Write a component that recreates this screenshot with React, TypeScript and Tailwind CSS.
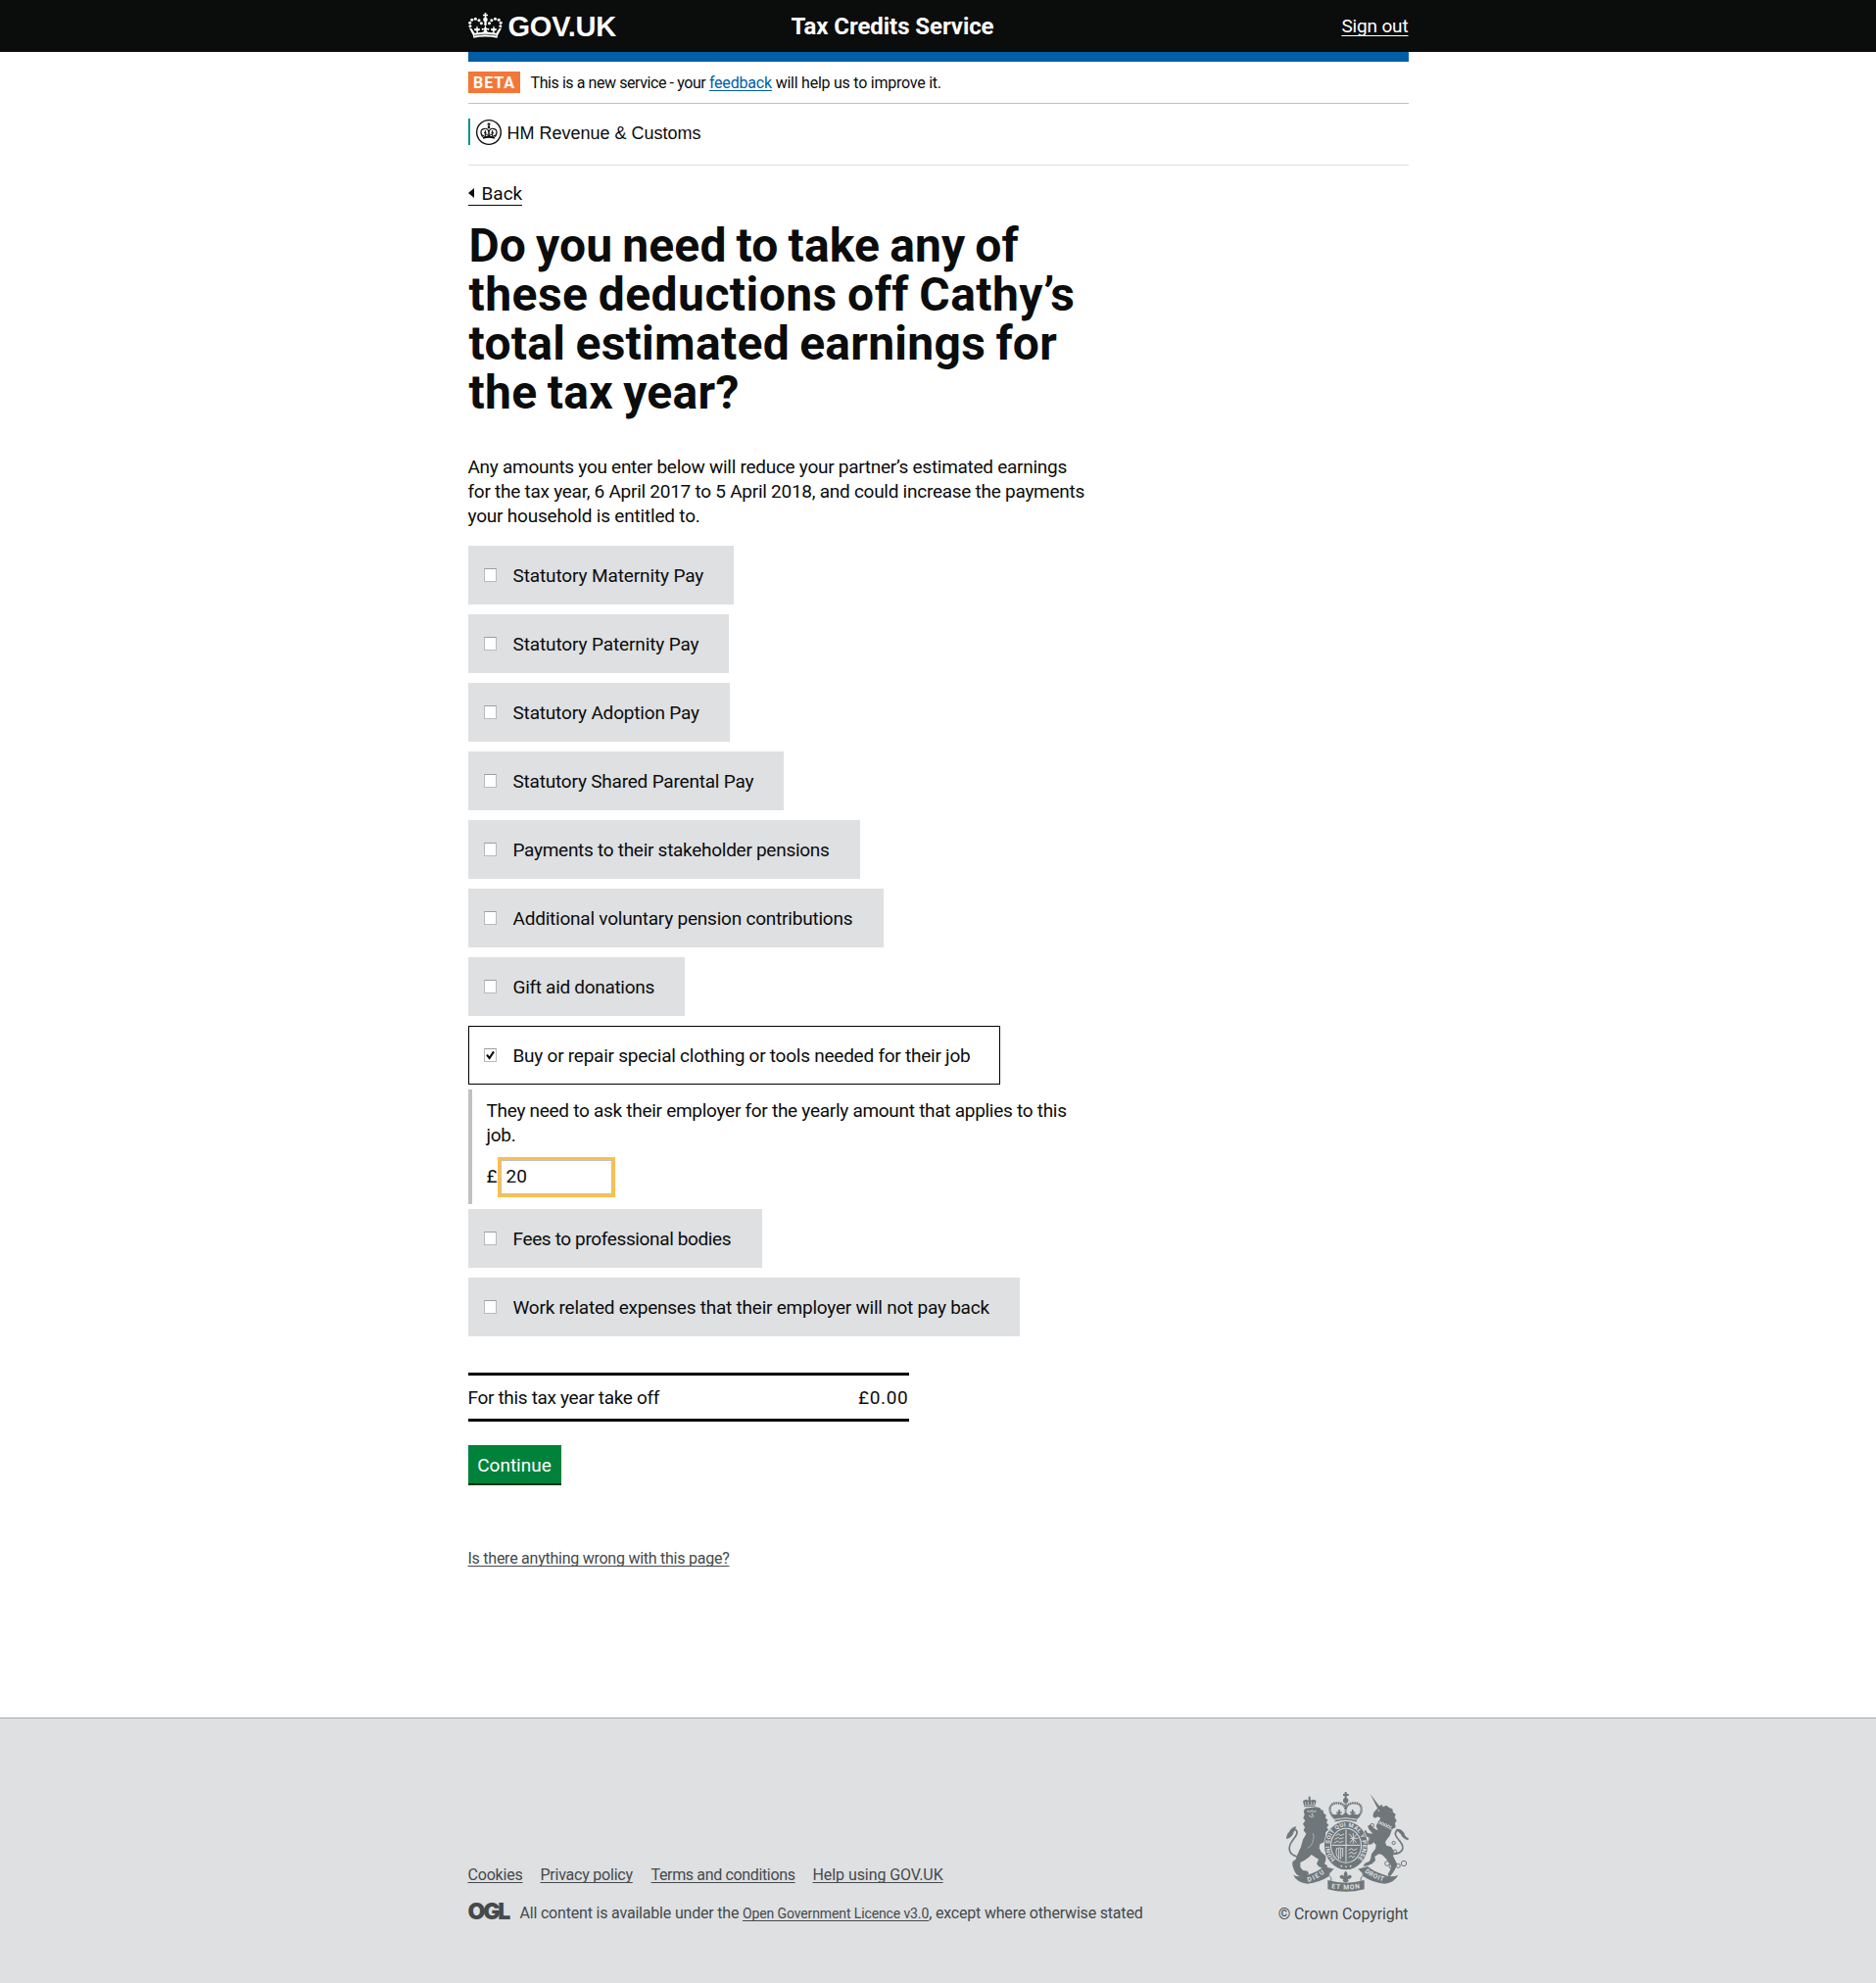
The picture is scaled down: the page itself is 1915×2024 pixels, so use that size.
import React from 'react';

type Deduction = { label: string; box: string; tracking: string };

const beforeSelected: Deduction[] = [
  { label: 'Statutory Maternity Pay', box: 'w-[271px]', tracking: 'tracking-[-0.12px]' },
  { label: 'Statutory Paternity Pay', box: 'w-[266px]', tracking: 'tracking-[-0.12px]' },
  { label: 'Statutory Adoption Pay', box: 'w-[267px]', tracking: 'tracking-[-0.18px]' },
  { label: 'Statutory Shared Parental Pay', box: 'w-[322px]', tracking: 'tracking-[-0.2px]' },
  { label: 'Payments to their stakeholder pensions', box: 'w-[400px]', tracking: 'tracking-[-0.28px]' },
  { label: 'Additional voluntary pension contributions', box: 'w-[424px]', tracking: 'tracking-[-0.22px]' },
  { label: 'Gift aid donations', box: 'w-[221px]', tracking: 'tracking-[-0.3px]' },
];

const afterSelected: Deduction[] = [
  { label: 'Fees to professional bodies', box: 'w-[300px]', tracking: 'tracking-[-0.37px]' },
  { label: 'Work related expenses that their employer will not pay back', box: 'w-[563px]', tracking: 'tracking-[-0.23px]' },
];

function Checkbox({ checked = false }: { checked?: boolean }) {
  return (
    <span className="mt-[23px] flex h-[14px] w-[13px] shrink-0 items-center justify-center border border-[#b8babb] border-t-[#9c9d9e] bg-white">
      {checked && (
        <svg viewBox="0 0 11 12" className="h-3 w-[11px]">
          <path d="M2 5.6 L4.6 9 L9 2.4" fill="none" stroke="#0b0c0c" strokeWidth="2.1" />
        </svg>
      )}
    </span>
  );
}

function Option({ item }: { item: Deduction }) {
  return (
    <label className={`flex h-[60px] bg-[#dee0e2] pl-4 ${item.box}`}>
      <Checkbox />
      <span className={`ml-[17px] pt-[18px] whitespace-nowrap ${item.tracking}`}>{item.label}</span>
    </label>
  );
}

function HeaderCrown() {
  const dots: [number, number][] = [[30, 80], [29, 70], [35, 61], [46, 58], [57, 62], [64, 71]];
  return (
    <svg viewBox="24 39 105 78" className="mt-[13px] h-[26px] w-[35px]" fill="#fff">
      {dots.map(([x, y]) => (
        <g key={`${x}-${y}`}>
          <circle cx={x} cy={y} r="4.6" />
          <circle cx={152.5 - x} cy={y} r="4.6" />
        </g>
      ))}
      <path d="M74 39h5v5h5v5h-5v5h-5v-5h-5v-5h5z" />
      <circle cx="76.3" cy="60" r="7" />
      <path d="M73 66h7v12h-7z" />
      <path d="M27 86 L35 88 L44 102 L50 100 L49 95 L42 92 L43 87 L48 88 L51 78 L54 88 L59 87 L60 92 L53 95 L54 100 L66 99 L72 96 L73 91 L66 93 L65 86 L72 88 L76.3 77 L81 88 L88 86 L87 93 L80 91 L81 96 L87 99 L99 100 L100 95 L93 92 L94 87 L99 88 L102 78 L105 88 L110 87 L111 92 L104 95 L103 100 L109 102 L118 88 L126 86 L114 109 L113 116 Q76 109 40 116 L39 109 Z" />
      <path d="M42 108.5 Q76 102 111 108.5" fill="none" stroke="#0b0c0c" strokeWidth="2" />
    </svg>
  );
}

function DepartmentCrest() {
  return (
    <svg viewBox="48 36 78 78" className="h-[26px] w-[26px]">
      <circle cx="87" cy="75" r="37" fill="#fff" stroke="#0b0c0c" strokeWidth="4" />
      <g fill="none" stroke="#0b0c0c">
        <path d="M68 89 C58 74 64 64 74 64 C82 63 86 67 87 76 C88 67 92 63 100 64 C110 64 116 74 106 89" strokeWidth="3.4" />
        <path d="M69 92 Q87 87 105 92" strokeWidth="6" />
        <path d="M87 46v12M82.500 50.500h9" strokeWidth="3.600" />
        <path d="M76 69v16M87 74v14M98 69v16M72 77h8M94 77h8M83 81h8" strokeWidth="3.2" />
        <path d="M66 84 L74 87 L80 82 L87 87 L94 82 L100 87 L108 84" strokeWidth="3" />
      </g>
      <circle cx="87" cy="60" r="4" fill="#0b0c0c" />
    </svg>
  );
}

function RoyalArms() {
  const g = '#6f777b';
  const bg = '#dee0e2';
  return (
    <svg viewBox="69 42 375 306" className="h-[102px] w-[125px]" fill={g}>
      <defs>
        <path id="garter" d="M219 249 A50.500 57.500 0 1 1 285 249" />
        <path id="scroll-left" d="M136 318 Q164 311 192 285" />
        <path id="scroll-mid" d="M207 336 Q251 345 298 336" />
        <path id="scroll-right" d="M309 287 Q334 308 368 316" />
      </defs>

      {/* lion */}
      <path d="M122 100 L128 92 L160 88 L172 91 L176 97 L182 98 L184 108 L191 112 L189 121 L196 128 L192 136 L199 144 L193 150 L198 158 L190 165 L189 176 L196 182 L207 180 L206 192 L196 199 L184 196 L172 202 L170 214 L176 226 L190 238 L190 252 L186 262 L195 268 L193 278 L180 276 L168 270 L162 262 L168 248 L158 242 L146 234 L138 242 L124 252 L112 258 L112 272 L120 282 L134 284 L138 292 L132 300 L112 302 L100 294 L94 284 L88 268 L88 256 L98 248 L104 232 L114 210 L120 188 L130 170 L122 160 L126 150 L120 140 L127 130 L121 122 L125 112 Z" />
      <path d="M133 100l10 3 4-5 6 5 8-3M138 114l8 5 8-4M148 106v8" fill="none" stroke={bg} strokeWidth="2.500" />
      <path d="M102 240 C78 234 72 216 86 194 C98 177 108 166 98 158 C92 154 88 164 82 174" fill="none" stroke={g} strokeWidth="5" />
      <path d="M69 186 Q70 170 78 164 Q84 150 100 148 Q96 158 92 164 Q90 180 69 186z" />
      <path d="M124 88 L120 70 Q128 62 136 68 L140 62 L145 68 Q155 62 161 70 L156 86 Z" />
      <path d="M137 56h6v10h-6z" />
      <path d="M128 73v8M136 72v8M146 72v8M154 72v8M124 84l32-3" fill="none" stroke={bg} strokeWidth="2" />
      <path d="M134 214q14-6 18-26M150 168q6 10 2 20" fill="none" stroke={bg} strokeWidth="1.500" />

      {/* unicorn */}
      <path d="M326 48 L356 88 L349 93 Z" />
      <path d="M348 92 L356 84 L362 80 L364 88 L376 83 L384 90 L394 94 L396 104 L404 110 L401 120 L407 130 L402 138 L404 150 L394 156 L390 164 L386 176 L378 186 L372 196 L376 206 L390 210 L398 222 L396 238 L402 250 L408 262 L404 276 L394 292 L384 304 L380 294 L388 280 L390 266 L382 256 L372 244 L362 234 L352 232 L340 240 L342 252 L332 262 L318 268 L304 270 L310 260 L324 254 L328 244 L330 232 L342 216 L344 204 L336 196 L332 202 L318 204 L310 198 L322 190 L326 182 L312 178 L304 166 L312 158 L318 168 L334 170 L322 156 L318 146 L328 142 L336 152 L350 160 L344 146 L350 134 L358 122 L350 118 L340 122 L334 116 L337 104 Z" />
      <path d="M350 136 L394 158" stroke={bg} strokeWidth="2.500" />
      <path d="M356 131l4 8 5-4 4 8 5-4 4 8 5-4 4 8 5-3" fill="none" stroke={bg} strokeWidth="3" />
      <circle cx="352" cy="99" r="2.500" fill={bg} />
      <g fill="none" stroke={g}>
        <path d="M394 232 C424 232 434 214 418 194 C404 178 398 168 408 160 C416 156 424 164 430 172" strokeWidth="5" />
        <circle cx="429" cy="261" r="8" strokeWidth="3" />
        <circle cx="412" cy="268" r="6" strokeWidth="3" />
        <circle cx="378" cy="261" r="7" strokeWidth="3" />
        <circle cx="390" cy="270" r="6" strokeWidth="3" />
        <circle cx="332" cy="145" r="6" strokeWidth="3" />
        <circle cx="328" cy="184" r="6" strokeWidth="3" />
        <circle cx="398" cy="198" r="5" strokeWidth="3" />
        <circle cx="402" cy="224" r="5" strokeWidth="3" />
      </g>
      <path d="M404 156 Q420 152 428 166 Q432 180 444 184 L442 190 Q424 184 420 172z" />

      {/* crown */}
      <g fill="none" stroke={g}>
        <path d="M217 122 C196 104 198 76 224 76 C240 75 248 84 251 94 C254 84 262 75 278 76 C304 76 306 104 285 122" strokeWidth="7" strokeDasharray="5 1.600" />
        <path d="M251 72v46" strokeWidth="6" strokeDasharray="5 1.600" />
        <path d="M251 42v20M243 51h17" strokeWidth="6" />
        <path d="M216 123 Q251 113 287 123M218 131 Q251 121 285 131" strokeWidth="5" />
        <path d="M231 96v20M272 96v20M223 105h16M264 105h16" strokeWidth="5" />
      </g>
      <circle cx="251" cy="68" r="8" />
      <path d="M206 108 L218 112 L230 107 L240 113 L251 104 L262 113 L273 107 L285 112 L297 108 L287 124 Q251 114 215 124z" />

      {/* garter and shield */}
      <ellipse cx="252" cy="206" rx="68" ry="76" fill={bg} />
      <ellipse cx="252" cy="206" rx="66" ry="74" />
      <ellipse cx="252" cy="206" rx="48" ry="54" fill={bg} />
      <ellipse cx="252" cy="206" rx="45" ry="51" />
      <text fill={bg} className="font-['Roboto'] text-[18px] font-bold">
        <textPath href="#garter" textLength="262">HONI SOIT QUI MAL Y PENSE</textPath>
      </text>
      <path d="M252 158v97M209 205h86" stroke={bg} strokeWidth="3" />
      <g fill="none" stroke={bg} strokeWidth="2.600">
        <path d="M220 176l10-6 4 6 12-5M217 187l12-6 4 5 12-4M215 198l12-6 5 5 12-4" />
        <path d="M262 170l22 28M284 172l-20 26M265 184h24M274 168v32" />
        <path d="M223 216q-4 20 8 30M230 216v32M236 216v32M242 216v24M222 216q10-6 22 0" />
        <path d="M260 220l10-5 4 6 12-5M260 231l10-5 4 6 12-5M260 242l8-5 4 6 8-5" />
      </g>
      <circle cx="238" cy="269" r="2.500" fill={bg} />
      <circle cx="252" cy="271" r="2.500" fill={bg} />
      <circle cx="266" cy="269" r="2.500" fill={bg} />

      {/* motto scroll */}
      <path d="M90 296 Q110 306 134 296 Q164 288 184 270 L216 278 Q196 288 200 300 Q170 320 134 323 Q102 320 90 296z" />
      <path d="M412 296 Q392 306 370 296 Q340 288 318 270 L288 278 Q308 288 304 300 Q334 320 370 323 Q400 320 412 296z" />
      <path d="M196 312 Q251 328 308 312 L308 340 Q251 355 196 340z" />
      <path d="M188 276q20 2 20 8-10 4-8 14 10 6 6 18M316 276q-20 2-20 8 10 4 8 14-10 6-6 18" fill="none" stroke={g} strokeWidth="3" />
      <path d="M251 284 Q260 292 255 301 Q264 292 269 300 Q270 308 258 309 L260 315 L251 320 L242 315 L244 309 Q232 308 233 300 Q240 292 247 301 Q242 292 251 284z" />
      <g fill={bg} className="font-['Roboto'] text-[20px] font-bold">
        <text><textPath href="#scroll-left" textLength="58">DIEU</textPath></text>
        <text><textPath href="#scroll-mid" textLength="88">ET MON</textPath></text>
        <text><textPath href="#scroll-right" textLength="64">DROIT</textPath></text>
      </g>
    </svg>
  );
}

const footerLinks = [
  { label: 'Cookies', style: 'w-[56px] tracking-[-0.2px]' },
  { label: 'Privacy policy', style: 'w-[95px] tracking-[-0.23px]' },
  { label: 'Terms and conditions', style: 'w-[147px] tracking-[-0.35px]' },
  { label: 'Help using GOV.UK', style: 'w-[134px] tracking-[-0.07px]' },
];

export default function App() {
  return (
    <div className="flex min-h-[2024px] flex-col bg-white font-['Roboto',sans-serif] text-[19px] leading-[25px] text-[#0b0c0c]">
      <header className="h-[53px] bg-[#0b0c0c] text-white">
        <div className="mx-auto flex w-[960px]">
          <div className="flex w-[330px]">
            <HeaderCrown />
            <span className="ml-[6px] font-['Liberation_Sans',sans-serif] text-[29px] leading-[55px] font-bold tracking-[-0.2px]">GOV.UK</span>
          </div>
          <span className="text-2xl leading-[55px] font-bold tracking-[-0.07px]">Tax Credits Service</span>
          <a className="mt-[14px] ml-auto tracking-[-0.15px] underline decoration-1 underline-offset-[3px] [text-decoration-skip-ink:none]">Sign out</a>
        </div>
      </header>

      <main className="mx-auto flex w-[960px] grow flex-col items-start">
        <div className="h-[10px] w-full bg-[#005ea5]" />
        <div className="flex h-[43px] w-full items-center border-b border-[#bfc1c3] text-base">
          <strong className="flex h-[22px] w-[53px] items-center justify-center bg-[#f47738] pt-px pl-px font-bold tracking-[0.9px] text-white">BETA</strong>
          <p className="ml-[11px] pt-[2px] tracking-[-0.42px] whitespace-pre">
            This is a new service - your{' '}
            <a className="tracking-[-0.19px] text-[#005ea5] underline decoration-1 underline-offset-2 [text-decoration-skip-ink:none]">feedback</a>
            <span className="tracking-[-0.24px]"> will help us to improve it.</span>
          </p>
        </div>

        <div className="h-[63px] w-full border-b border-[#dee0e2] pt-[15px]">
          <div className="flex h-[27px] items-center border-l-2 border-[#009390] pl-[6px]">
            <DepartmentCrest />
            <span className="ml-[6px] pt-[2px] font-['Liberation_Sans',sans-serif] text-lg leading-6">HM Revenue &amp; Customs</span>
          </div>
        </div>

        <a className="mt-4 flex h-[25px] items-start border-b border-[#0b0c0c]">
          <svg viewBox="0 0 6 10" className="mt-[7px] mr-2 h-[10px] w-[6px]">
            <path d="M6 0v10L0 5z" fill="#0b0c0c" />
          </svg>
          <span>Back</span>
        </a>

        <h1 className="mt-4 flex flex-col pl-px text-5xl leading-[50px] font-bold [word-spacing:-2px]">
          <span className="tracking-[0.12px]">Do you need to take any of</span>
          <span className="tracking-[0.45px]">these deductions off Cathy’s</span>
          <span className="tracking-[0.28px]">total estimated earnings for</span>
          <span className="tracking-[0.3px]">the tax year?</span>
        </h1>

        <p className="mt-[38px] flex flex-col tracking-[-0.275px]">
          <span>Any amounts you enter below will reduce your partner’s estimated earnings</span>
          <span className="tracking-[-0.26px]">for the tax year, 6 April 2017 to 5 April 2018, and could increase the payments</span>
          <span className="tracking-[-0.2px]">your household is entitled to.</span>
        </p>

        <div className="mt-[18px] flex flex-col gap-[10px]">
          {beforeSelected.map((item) => (
            <Option key={item.label} item={item} />
          ))}
          <label className="flex h-[60px] w-[543px] border border-black pl-[15px]">
            <span className="-mt-px flex">
              <Checkbox checked />
              <span className="ml-[17px] pt-[18px] tracking-[-0.24px] whitespace-nowrap">
                Buy or repair special clothing or tools needed for their job
              </span>
            </span>
          </label>
        </div>

        <div className="my-[5px] h-[117px] w-[640px] border-l-4 border-[#bfc1c3] pt-[9px] pl-[15px]">
          <p className="w-[610px] tracking-[-0.28px]">They need to ask their employer for the yearly amount that applies to this job.</p>
          <div className="mt-[10px] flex items-center">
            <span className="w-[11px] pb-[2px]">£</span>
            <span className="flex h-[41px] w-[120px] items-center border-[3px] border-[#ffbf47]">
              <span className="flex h-[35px] w-[114px] items-center border border-[#bfc1c3] pb-[2px] pl-[5px]">20</span>
            </span>
          </div>
        </div>

        <div className="flex flex-col gap-[10px]">
          {afterSelected.map((item) => (
            <Option key={item.label} item={item} />
          ))}
        </div>

        <div className="mt-[37px] flex h-[50px] w-[450px] justify-between border-y-[3px] border-black pt-[10px]">
          <span className="tracking-[-0.33px]">For this tax year take off</span>
          <span className="tracking-[0.7px]">£0.00</span>
        </div>

        <button className="mt-6 h-[41px] w-[95px] border-b-2 border-[#003618] bg-[#00823b] pt-px text-white">Continue</button>

        <a className="mt-[65px] text-base leading-5 tracking-[-0.25px] text-[#454a4c] underline decoration-1 underline-offset-2 [text-decoration-skip-ink:none]">
          Is there anything wrong with this page?
        </a>
      </main>

      <footer className="h-[271px] border-t border-[#a1acb2] bg-[#dee0e2] text-base leading-5 text-[#454a4c]">
        <div className="mx-auto flex w-[960px] justify-between">
          <div className="pt-[150px]">
            <nav className="flex gap-[18px]">
              {footerLinks.map((link) => (
                <a key={link.label} className={`whitespace-nowrap underline decoration-1 underline-offset-2 [text-decoration-skip-ink:none] ${link.style}`}>
                  {link.label}
                </a>
              ))}
            </nav>
            <div className="mt-[19px] flex items-start">
              <span className="-mt-[2px] w-[53px] font-['Inter',sans-serif] text-[23px] font-black tracking-[-2.2px]">OGL</span>
              <p className="tracking-[-0.19px] whitespace-pre">
                All content is available under the{' '}
                <a className="text-sm leading-5 tracking-[-0.12px] underline decoration-1 underline-offset-2 [text-decoration-skip-ink:none]">Open Government Licence v3.0</a>
                , except where otherwise stated
              </p>
            </div>
          </div>
          <div className="flex flex-col items-end pt-[75px]">
            <RoyalArms />
            <span className="mt-[13px] tracking-[-0.1px]">© Crown Copyright</span>
          </div>
        </div>
      </footer>
    </div>
  );
}
